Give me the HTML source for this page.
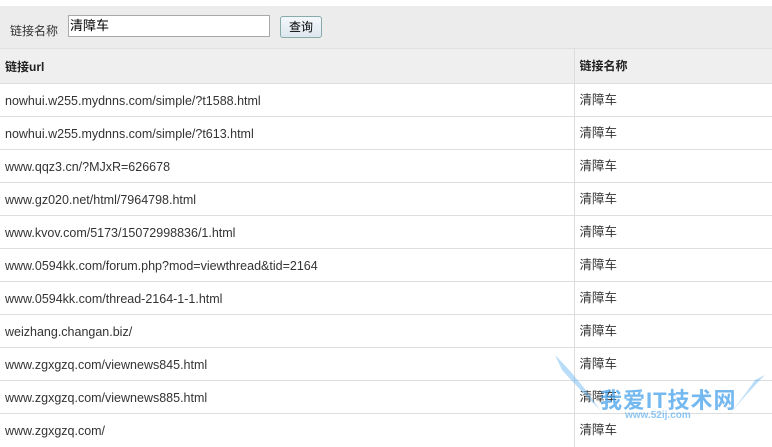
<!DOCTYPE html>
<html><head><meta charset="utf-8"><style>
body{margin:0;width:772px;height:429px;overflow:hidden;background:#fff;font-family:"Liberation Sans","Noto Sans CJK SC",sans-serif;font-size:12px;color:#222;position:relative}
.bar{position:absolute;top:6px;left:0;width:772px;height:42px;background:#ececec}
.lbl{position:absolute;left:10px;top:22px;font-size:12px;color:#333}
.inp{position:absolute;left:68px;top:15px;width:202px;height:22px;border:1px solid #a9a9a9;background:#fff;font-size:13px;line-height:20px;padding-left:1px;box-sizing:border-box;color:#000}
.btn{position:absolute;left:280px;top:16px;width:42px;height:22px;border:1px solid #8aa;border-radius:3px;background:linear-gradient(#f4f8fb,#dde7ee);box-sizing:border-box;text-align:center;line-height:20px;font-size:12px;color:#000}
table{position:absolute;top:48px;left:0;width:772px;border-collapse:collapse}
td{height:33px;border-top:1px solid #ddd;padding:2px 0 0 5px;font-size:12.5px;line-height:14px;color:#333;vertical-align:middle;box-sizing:border-box}
td.c2{border-left:1px solid #ddd;width:198px;font-size:12.5px;padding-top:0}
tr.h td{background:#efefef;font-weight:bold;color:#222;border-top:1px solid #e0e0e0;height:35px;font-size:12px}
.wm{position:absolute;left:600px;top:383px;font-size:22px;font-weight:bold;color:rgba(70,160,235,.75);letter-spacing:1px}
.wm2{position:absolute;left:625px;top:410px;font-size:10px;font-weight:bold;color:rgba(70,160,235,.6)}
</style></head><body>
<div class="bar"></div>
<div class="lbl">链接名称</div>
<div class="inp">清障车</div>
<div class="btn">查询</div>
<table>
<tr class="h"><td>链接url</td><td class="c2">链接名称</td></tr>
<tr><td>nowhui.w255.mydnns.com/simple/?t1588.html</td><td class="c2">清障车</td></tr>
<tr><td>nowhui.w255.mydnns.com/simple/?t613.html</td><td class="c2">清障车</td></tr>
<tr><td>www.qqz3.cn/?MJxR=626678</td><td class="c2">清障车</td></tr>
<tr><td>www.gz020.net/html/7964798.html</td><td class="c2">清障车</td></tr>
<tr><td>www.kvov.com/5173/15072998836/1.html</td><td class="c2">清障车</td></tr>
<tr><td>www.0594kk.com/forum.php?mod=viewthread&amp;tid=2164</td><td class="c2">清障车</td></tr>
<tr><td>www.0594kk.com/thread-2164-1-1.html</td><td class="c2">清障车</td></tr>
<tr><td>weizhang.changan.biz/</td><td class="c2">清障车</td></tr>
<tr><td>www.zgxgzq.com/viewnews845.html</td><td class="c2">清障车</td></tr>
<tr><td>www.zgxgzq.com/viewnews885.html</td><td class="c2">清障车</td></tr>
<tr><td>www.zgxgzq.com/</td><td class="c2">清障车</td></tr>
</table>
<svg style="position:absolute;left:550px;top:350px" width="222" height="79">
<path d="M5 5 Q30 30 50 60 Q30 40 12 20Z" fill="rgba(100,180,240,.45)"/>
<path d="M215 25 Q195 45 175 70 Q195 45 205 30Z" fill="rgba(100,180,240,.45)"/>
</svg>
<div class="wm">我爱IT技术网</div>
<div class="wm2">www.52ij.com</div>
</body></html>
